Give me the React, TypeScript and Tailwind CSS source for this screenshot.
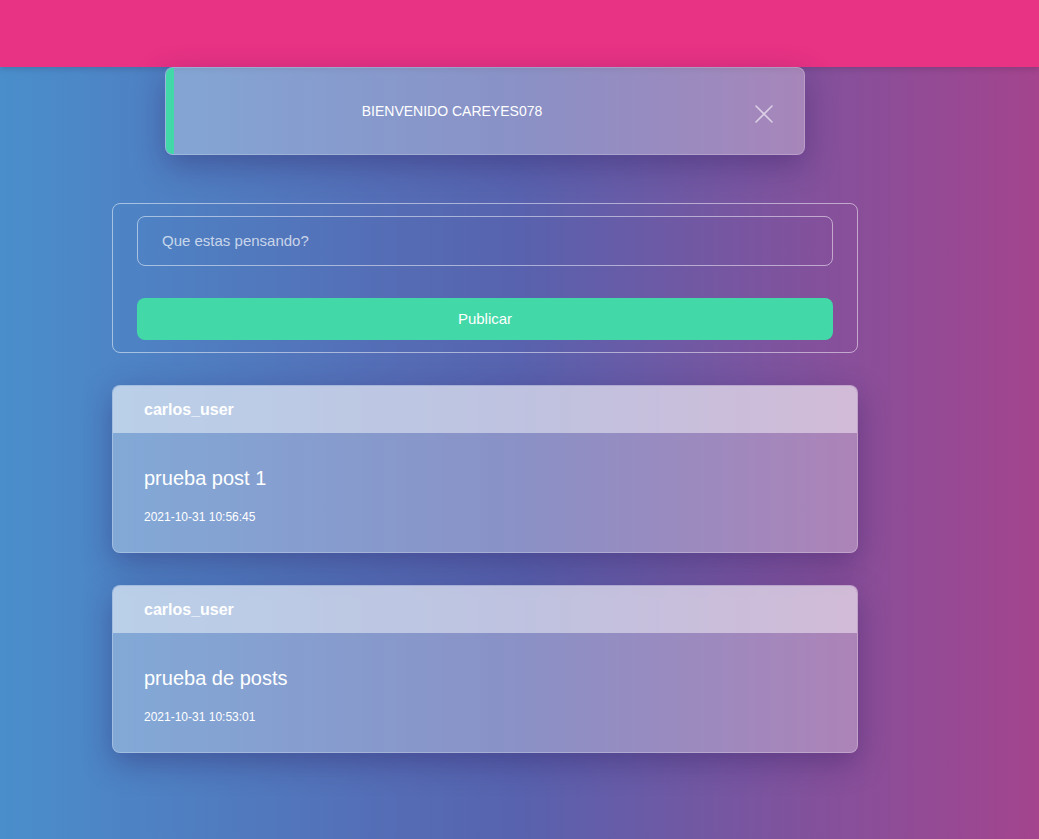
import React from 'react';

const posts = [
  { id: 1, user: 'carlos_user', body: 'prueba post 1', date: '2021-10-31 10:56:45' },
  { id: 2, user: 'carlos_user', body: 'prueba de posts', date: '2021-10-31 10:53:01' },
];

export default function App() {
  return (
    <div
      className="min-h-[839px] w-full bg-[linear-gradient(90deg,#4a8ecc_0%,#5862ae_50%,#a4448e_100%)] text-white"
      style={{ fontFamily: '"Liberation Sans", Arial, sans-serif' }}
    >
      {/* Top bar */}
      <header className="h-[67px] bg-[#e83284] shadow-[0_2px_6px_rgba(0,0,0,0.15)]" />

      {/* Welcome toast */}
      <div className="ml-[165px] w-[640px] h-[88px] flex rounded-lg overflow-hidden bg-white/30 border border-white/20 shadow-[0_10px_30px_rgba(40,20,90,0.35)]">
        <div className="w-[8px] bg-[#42d8a8] shrink-0" />
        <div className="flex-1 flex items-center justify-center text-[14px] pl-[6px]">BIENVENIDO CAREYES078</div>
        <button className="w-[80px] flex items-center justify-center text-white/60 pt-[6px]">
          <svg width="20" height="20" viewBox="0 0 20 20" fill="none" stroke="currentColor" strokeWidth="1.6" strokeLinecap="round">
            <path d="M2 2 L18 18 M18 2 L2 18" />
          </svg>
        </button>
      </div>

      {/* New post form */}
      <div className="ml-[112px] mt-[48px] w-[746px] border border-white/50 rounded-lg px-[24px] pt-[12px] pb-[12px]">
        <div className="h-[50px] border border-white/50 rounded-lg flex items-center px-[24px] text-[15px] text-white/70">
          Que estas pensando?
        </div>
        <button className="mt-[32px] w-full h-[42px] rounded-lg bg-[#42d8a8] text-[15px] text-white">Publicar</button>
      </div>

      {/* Posts */}
      <div className="ml-[112px] w-[746px] mt-[32px] flex flex-col gap-[32px] pb-[86px]">
        {posts.map((p) => (
          <div
            key={p.id}
            className="rounded-lg overflow-hidden bg-white/30 border border-white/25 shadow-[0_10px_30px_rgba(40,20,90,0.35)]"
          >
            <div className="h-[47px] bg-white/45 flex items-center px-[31px] text-[16px] font-bold">{p.user}</div>
            <div className="px-[31px] pt-[32px] pb-[27px]">
              <p className="text-[20px] leading-[26px]">{p.body}</p>
              <p className="mt-[18px] text-[12px] leading-[16px]">{p.date}</p>
            </div>
          </div>
        ))}
      </div>
    </div>
  );
}
